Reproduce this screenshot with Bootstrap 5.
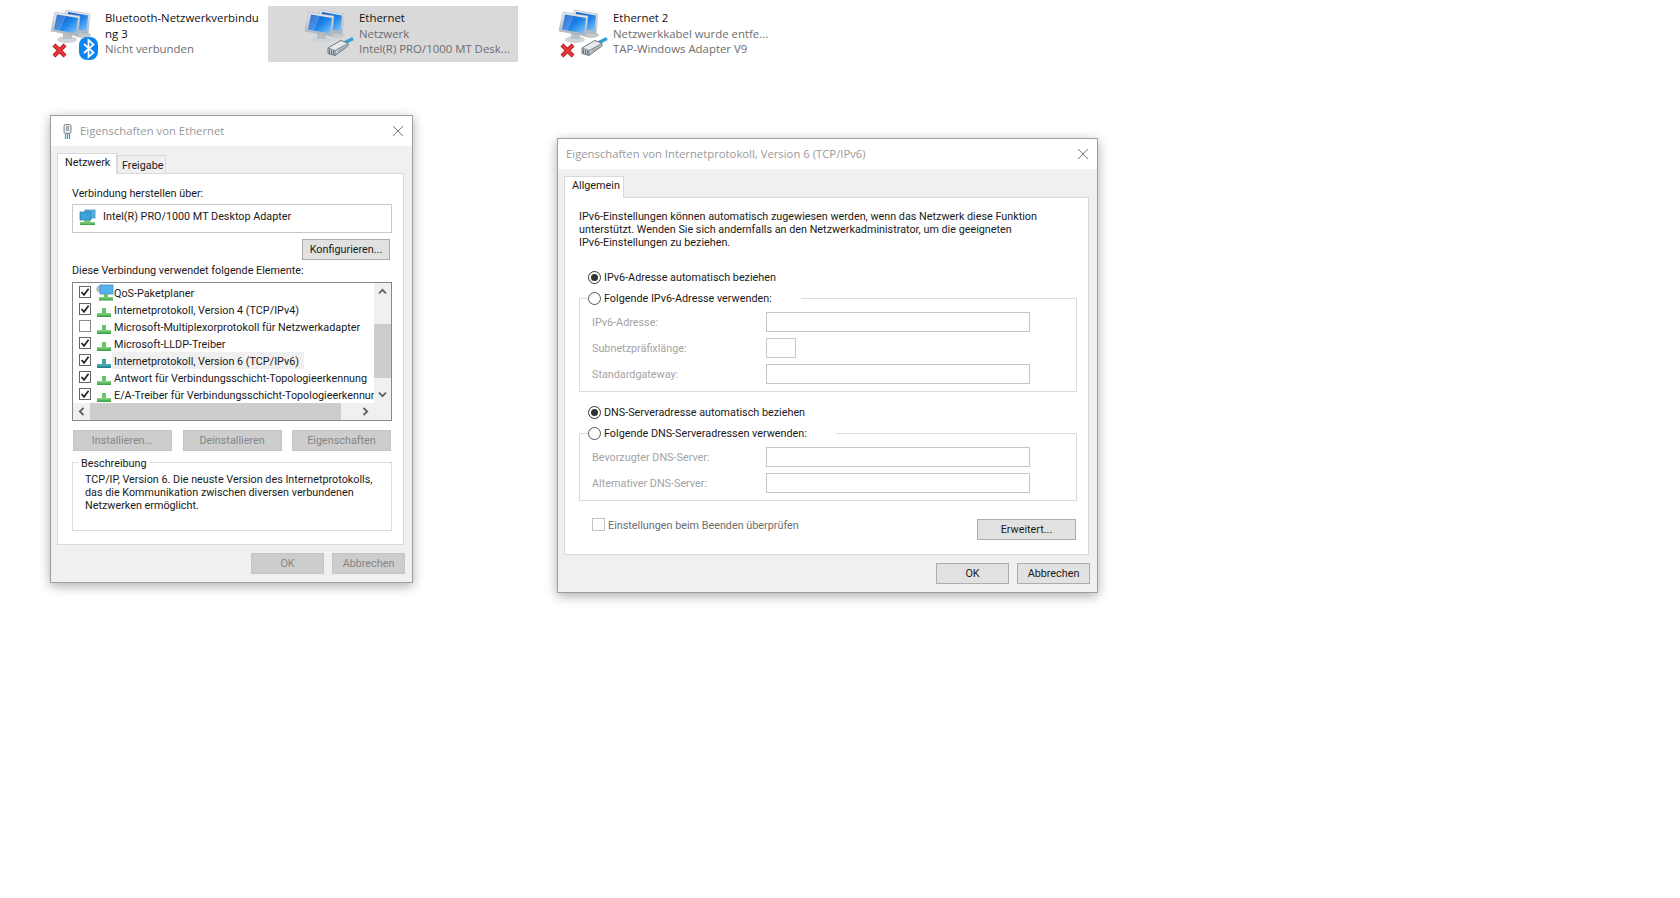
<!DOCTYPE html>
<html lang="de">
<head>
<meta charset="UTF-8">
<title>Netzwerkverbindungen</title>
<link href="https://cdn.jsdelivr.net/npm/bootstrap@5.3.0/dist/css/bootstrap.min.css" rel="stylesheet">
<style>
  body { background: #fff; font-family: "Open Sans", "Liberation Sans", sans-serif; font-size: 11.4px; color: #1a1a1a; height: 898px; overflow: hidden; position: relative; }

  /* explorer items */
  .conn-row { padding: 6px 0 0 14px; gap: 4px; }
  .conn-item { width: 250px; height: 56px; padding: 4px 0 0 36px; font-size: 11.4px; line-height: 15.5px; }
  .conn-item.is-selected { background: #d9d9d9; }
  .conn-item svg { width: 54px; height: 56px; margin: -4px 1px 0 0; flex: none; }
  .conn-sub { color: #6d6d6d; white-space: nowrap; }
  .conn-name { color: #111; white-space: nowrap; }

  /* dialogs */
  .win { position: absolute; background: #f0f0f0; border: 1px solid #9d9d9d; box-shadow: 0 3px 11px rgba(0,0,0,.32); font-family: Roboto, "Liberation Sans", sans-serif; font-size: 10.8px; }
  .win-eth { left: 50px; top: 115px; width: 363px; height: 468px; }
  .win-ipv6 { left: 557px; top: 138px; width: 541px; height: 455px; }
  .win-title { height: 30px; background: #fff; color: #999; font-family: "Open Sans", sans-serif; font-size: 11.3px; padding: 0 9px 0 8px; }
  .win-eth .win-title { padding-left: 12px; }
  .win-title svg.plug { margin-right: 8px; }
  .win-close { width: 10px; height: 10px; }

  .win .nav-tabs { border: 0; margin: 7px 0 0 6px; align-items: flex-end; flex-wrap: nowrap; }
  .win .nav-link { background: #f0f0f0; border: 1px solid #d9d9d9; border-bottom: 0; border-radius: 0; color: #1a1a1a; padding: 1px 4px 0; height: 18px; line-height: 17px; margin: 0; font-size: 10.8px; }
  .win .nav-link.active { background: #fff; height: 21px; line-height: 18px; margin-bottom: -1px; position: relative; z-index: 1; color: #1a1a1a; border-color: #d9d9d9; padding: 0 7px; }
  .win-eth .nav-link.active { width: 60px; }
  .win-eth .nav-link:not(.active) { width: 49px; margin-left: 0; }
  .win-ipv6 .nav-link.active { width: 60px; height: 22px; }
  .win-panel { background: #fff; border: 1px solid #d9d9d9; margin-left: 6px; padding: 12px 11px 0 14px; }
  .win-eth .win-panel { width: 347px; height: 372px; }
  .win-ipv6 .win-panel { width: 525px; height: 358px; }
  .win-foot { gap: 8px; justify-content: flex-end; margin-top: 8px; padding-right: 7px; }

  .win-btn { height: 21px; padding: 1px 0 0; border-radius: 0; font-size: 10.8px; line-height: 18px; background: #e1e1e1; border: 1px solid #adadad; color: #1a1a1a; }
  .win-btn:disabled { background: #cdcdcd; border-color: #c4c4c4; color: #858585; opacity: 1; }
  .win-foot .win-btn { width: 73px; }

  .lbl { line-height: 15px; }
  .adapter-box { width: 320px; height: 29px; border: 1px solid #c8c8c8; margin-top: 3px; padding: 4px 0 0 6px; gap: 7px; line-height: 15px; }
  .btn-config { width: 88px; margin: 6px 2px 0 auto; display: block; }
  .lbl-elements { margin-top: 3px; }

  .comp-list { width: 320px; height: 139px; border: 1px solid #828790; margin-top: 4px; }
  .comp-left { width: 301px; }
  .comp-rows { height: 120px; padding: 1px 0 0 6px; overflow: hidden; }
  .comp-row { height: 17px; line-height: 19px; white-space: nowrap; background: transparent; border: 0; padding: 0; border-radius: 0; color: #1a1a1a; font-size: 10.8px; }
  .comp-row .comp-ico { width: 14px; height: 9px; margin: 7px 3px 0 6px; flex: none; }
  .comp-row .comp-ico-qos { width: 18px; height: 17px; margin: 0 0 0 5px; flex: none; }
  .comp-sel { background: #f0f0f0; margin-left: -2px; padding: 0 5px 0 2px; line-height: 17px; padding-top: 1px; }

  .cb { width: 12px; height: 12px; border: 1px solid #666; flex: none; background: #fff; margin-top: 2px; }
  .cb svg { display: block; width: 10px; height: 10px; }
  .cb-off { border-color: #8a8a8a; }

  .vbar { width: 17px; background: #f0f0f0; }
  .hbar { height: 17px; background: #f0f0f0; }
  .bar-arrow { width: 17px; height: 17px; flex: none; }
  .bar-arrow svg { width: 9px; height: 9px; }
  .vbar-thumb { height: 54px; margin-top: 24px; margin-bottom: auto; background: #cdcdcd; }
  .hbar-thumb { width: 251px; background: #cdcdcd; margin-right: auto; }

  .btn-row { margin: 9px 1px 0 1px; width: 318px; }
  .btn-row .win-btn { width: 99px; }

  .grp-desc { width: 320px; height: 69px; border: 1px solid #dcdcdc; margin-top: 11px; }
  .grp-legend { display: block; width: fit-content; background: #fff; margin: -7px 0 0 5px; padding: 0 3px; line-height: 15px; }
  .grp-text { margin: 2px 0 0 12px; line-height: 13px; white-space: nowrap; }

  .para { line-height: 13px; white-space: nowrap; }
  .rd { width: 13px; height: 13px; border: 1px solid #555; border-radius: 50%; background: #fff; flex: none; margin-right: 3px; }
  .rd-on { border-color: #333; }
  .rd-on::after { content: ""; width: 7px; height: 7px; border-radius: 50%; background: #333; }
  .rd-line { height: 16px; line-height: 16px; margin-left: 9px; white-space: nowrap; }
  .rd-txt { padding-top: 2px; }
  .rd-first { margin-top: 20px; }
  .rd-second { margin-top: 12px; }
  .ip-grp { width: 498px; border: 1px solid #dcdcdc; margin-top: 13px; padding: 0 0 7px 12px; }
  .ip-legend { width: fit-content; background: #fff; margin: -9px 0 0 -4px; padding-right: 29px; padding-left: 0; }
  .ip-field { height: 20px; margin-top: 6px; color: #a3a3a3; }
  .ip-field .ip-lbl { width: 174px; padding-top: 2px; }
  .ip-input { width: 264px; height: 20px; min-height: 0; padding: 0; border-radius: 0; border: 1px solid #c6c6c6; background: #fff; }
  .ip-input:disabled { background: #fff; }
  .ip-input-short { width: 30px; }
  .ip-foot { width: 497px; margin-top: 18px; }
  .ip-check { padding-left: 13px; color: #6d6d6d; gap: 3px; line-height: 13px; margin-top: -1px; }
  .ip-check .cb { width: 13px; height: 13px; border-color: #c2c2c2; margin-top: 0; }
  .ip-check-txt { padding-top: 1px; }
  .btn-adv { width: 99px; }
</style>
</head>
<body>

<svg width="0" height="0" class="d-block" style="position:absolute">
  <defs>
    <linearGradient id="gScreen" x1="0" y1="0" x2="1" y2="1"><stop offset="0" stop-color="#0a4fc4"/><stop offset=".55" stop-color="#1f86ea"/><stop offset="1" stop-color="#8cc9f7"/></linearGradient>
    <linearGradient id="gFrame" x1="0" y1="0" x2="0" y2="1"><stop offset="0" stop-color="#e8edf1"/><stop offset="1" stop-color="#aab3ba"/></linearGradient>
    <linearGradient id="gGreen" x1="0" y1="0" x2="0" y2="1"><stop offset="0" stop-color="#8fd68a"/><stop offset="1" stop-color="#2f9e3c"/></linearGradient>
    <linearGradient id="gTeal" x1="0" y1="0" x2="0" y2="1"><stop offset="0" stop-color="#59b3b3"/><stop offset="1" stop-color="#1c7c8c"/></linearGradient>
    <symbol id="pcs" viewBox="0 0 54 56">
      <ellipse cx="33" cy="29" rx="8" ry="3" fill="#c3c9ce"/>
      <polygon points="16,4 40,8 38,28 14,25" fill="url(#gFrame)" stroke="#b4bcc3" stroke-width=".6"/>
      <polygon points="18,6 38,9.5 36.5,25 17,22" fill="url(#gScreen)"/>
      <ellipse cx="17" cy="33.500" rx="10" ry="3.600" fill="#cfd4d8"/>
      <polygon points="13,26 22,27 22,33 13,33" fill="#b9c0c6"/>
      <polygon points="5,6 30,10 28,30 1,25" fill="url(#gFrame)" stroke="#a9b2b9" stroke-width=".6"/>
      <polygon points="7,8.500 28,12 26.300,27.500 4,23.500" fill="url(#gScreen)"/>
      <polygon points="7,8.500 16,10 10,24.500 4,23.500" fill="#fff" opacity=".18"/>
    </symbol>
    <symbol id="redx" viewBox="0 0 54 56">
      <path d="M4 39 L15 50 M15 39 L4 50" stroke="#a3161b" stroke-width="4.2" fill="none"/>
      <path d="M4 39 L15 50 M15 39 L4 50" stroke="#e8353a" stroke-width="2.600" fill="none"/>
    </symbol>
    <symbol id="ethplug" viewBox="0 0 54 56">
      <path d="M40 37 L49 32.500" stroke="#35a0d8" stroke-width="3.500" fill="none"/>
      <polygon points="24,42 37,34.500 44,37.500 44,40 31,49.500 24,47.500" fill="#c6ccd1" stroke="#66717a" stroke-width=".9"/>
      <polygon points="24,42 31,44.500 44,37.500 37,34.500" fill="#e6eaed" stroke="#66717a" stroke-width=".7"/>
      <path d="M31 44.500 V49.500" stroke="#66717a" stroke-width=".9" fill="none"/>
      <path d="M25.500 43.500 V47.500 M27.500 44 V48 M29.500 44.500 V48.500" stroke="#59646d" stroke-width=".9" fill="none"/>
      <path d="M33.500 43.500 L42.500 38.500 M33.500 45.500 L42.500 40.500" stroke="#838d95" stroke-width=".8" fill="none"/>
    </symbol>
    <symbol id="proto" viewBox="0 0 14 9">
      <rect x="5" y="0" width="4" height="5" fill="#6cc26a"/>
      <rect x="0" y="5" width="14" height="4" fill="url(#gGreen)"/>
    </symbol>
    <symbol id="protoTeal" viewBox="0 0 14 9">
      <rect x="5" y="0" width="4" height="5" fill="#4aa0a8"/>
      <rect x="0" y="5" width="14" height="4" fill="url(#gTeal)"/>
    </symbol>
    <symbol id="tick" viewBox="0 0 10 10">
      <path d="M1.500 5 L4 7.800 L8.600 1.800" stroke="#222" stroke-width="1.700" fill="none"/>
    </symbol>
    <symbol id="chev-up" viewBox="0 0 9 9"><path d="M1 6.500 L4.500 2.800 L8 6.500" stroke="#5f5f5f" stroke-width="1.800" fill="none"/></symbol>
    <symbol id="chev-down" viewBox="0 0 9 9"><path d="M1 2.500 L4.500 6.200 L8 2.500" stroke="#5f5f5f" stroke-width="1.800" fill="none"/></symbol>
    <symbol id="chev-left" viewBox="0 0 9 9"><path d="M6.500 1 L2.800 4.500 L6.500 8" stroke="#5f5f5f" stroke-width="1.800" fill="none"/></symbol>
    <symbol id="chev-right" viewBox="0 0 9 9"><path d="M2.500 1 L6.200 4.500 L2.500 8" stroke="#5f5f5f" stroke-width="1.800" fill="none"/></symbol>
    <symbol id="x-close" viewBox="0 0 10 10"><path d="M0 0 L10 10 M10 0 L0 10" stroke="#7a7a7a" stroke-width="1" fill="none"/></symbol>
  </defs>
</svg>

<!-- network connections -->
<div class="conn-row d-flex">
  <div class="conn-item d-flex">
    <svg viewBox="0 0 54 56">
      <use href="#pcs"/><use href="#redx"/>
      <rect x="29" y="31" width="19" height="23" rx="8" fill="#0a84f0"/>
      <path d="M34 38 L43.500 46.500 L38.500 51 V34 L43.500 38.500 L34 47" stroke="#fff" stroke-width="1.700" fill="none"/>
    </svg>
    <div>
      <div class="conn-name">Bluetooth-Netzwerkverbindu<br>ng 3</div>
      <div class="conn-sub">Nicht verbunden</div>
    </div>
  </div>
  <div class="conn-item is-selected d-flex">
    <svg viewBox="0 0 54 56"><use href="#pcs"/><use href="#ethplug"/></svg>
    <div>
      <div class="conn-name">Ethernet</div>
      <div class="conn-sub">Netzwerk</div>
      <div class="conn-sub">Intel(R) PRO/1000 MT Desk...</div>
    </div>
  </div>
  <div class="conn-item d-flex">
    <svg viewBox="0 0 54 56"><use href="#pcs"/><use href="#redx"/><use href="#ethplug"/></svg>
    <div>
      <div class="conn-name">Ethernet 2</div>
      <div class="conn-sub">Netzwerkkabel wurde entfe...</div>
      <div class="conn-sub">TAP-Windows Adapter V9</div>
    </div>
  </div>
</div>

<!-- Eigenschaften von Ethernet -->
<div class="win win-eth">
  <div class="win-title d-flex align-items-center">
    <svg class="plug" width="9" height="15" viewBox="0 0 9 15">
      <rect x="1" y="0.500" width="7" height="9" rx="1.500" fill="#e3e6e8" stroke="#7f8a92"/>
      <rect x="3" y="2" width="3" height="5" fill="#a8b1b8"/>
      <path d="M2.500 10 V15 M4.500 10 V15 M6.500 10 V15" stroke="#3b9ad0" stroke-width="1.200"/>
    </svg>
    <span>Eigenschaften von Ethernet</span>
    <svg class="win-close ms-auto"><use href="#x-close"/></svg>
  </div>
  <ul class="nav nav-tabs">
    <li class="nav-item"><a class="nav-link active" href="#">Netzwerk</a></li>
    <li class="nav-item"><a class="nav-link" href="#">Freigabe</a></li>
  </ul>
  <div class="win-panel">
    <div class="lbl">Verbindung herstellen über:</div>
    <div class="adapter-box d-flex align-items-start">
      <svg width="17" height="17" viewBox="0 0 17 17">
        <rect x="6" y="1" width="10" height="8" fill="#58b4e8" stroke="#3c7fb0" stroke-width=".7"/>
        <rect x="1" y="3" width="11" height="8" fill="#3aa3de" stroke="#2c6f9f" stroke-width=".7"/>
        <rect x="5" y="11" width="6" height="2" fill="#6cc26a"/>
        <rect x="1" y="13" width="15" height="3" fill="url(#gGreen)"/>
      </svg>
      <span>Intel(R) PRO/1000 MT Desktop Adapter</span>
    </div>
    <button class="btn win-btn btn-config">Konfigurieren...</button>
    <div class="lbl lbl-elements">Diese Verbindung verwendet folgende Elemente:</div>

    <div class="comp-list d-flex">
      <div class="comp-left d-flex flex-column">
        <div class="comp-rows list-group">
          <div class="comp-row list-group-item d-flex">
            <span class="cb d-block"><svg><use href="#tick"/></svg></span>
            <svg class="comp-ico-qos" viewBox="0 0 18 17">
              <circle cx="4" cy="5" r="3.200" fill="#b9bfc4" stroke="#8f979e" stroke-width=".6"/>
              <rect x="4" y="1" width="13" height="9" fill="#54b2ef" stroke="#3a86bd" stroke-width=".7"/>
              <rect x="8" y="10" width="4" height="3" fill="#6cc26a"/>
              <rect x="3" y="13" width="14" height="3.500" fill="url(#gGreen)"/>
            </svg>
            <span>QoS-Paketplaner</span>
          </div>
          <div class="comp-row list-group-item d-flex">
            <span class="cb d-block"><svg><use href="#tick"/></svg></span>
            <svg class="comp-ico"><use href="#proto"/></svg>
            <span>Internetprotokoll, Version 4 (TCP/IPv4)</span>
          </div>
          <div class="comp-row list-group-item d-flex">
            <span class="cb cb-off d-block"></span>
            <svg class="comp-ico"><use href="#proto"/></svg>
            <span>Microsoft-Multiplexorprotokoll für Netzwerkadapter</span>
          </div>
          <div class="comp-row list-group-item d-flex">
            <span class="cb d-block"><svg><use href="#tick"/></svg></span>
            <svg class="comp-ico"><use href="#proto"/></svg>
            <span>Microsoft-LLDP-Treiber</span>
          </div>
          <div class="comp-row list-group-item d-flex">
            <span class="cb d-block"><svg><use href="#tick"/></svg></span>
            <svg class="comp-ico"><use href="#protoTeal"/></svg>
            <span class="comp-sel">Internetprotokoll, Version 6 (TCP/IPv6)</span>
          </div>
          <div class="comp-row list-group-item d-flex">
            <span class="cb d-block"><svg><use href="#tick"/></svg></span>
            <svg class="comp-ico"><use href="#proto"/></svg>
            <span>Antwort für Verbindungsschicht-Topologieerkennung</span>
          </div>
          <div class="comp-row list-group-item d-flex">
            <span class="cb d-block"><svg><use href="#tick"/></svg></span>
            <svg class="comp-ico"><use href="#proto"/></svg>
            <span>E/A-Treiber für Verbindungsschicht-Topologieerkennung</span>
          </div>
        </div>
        <div class="hbar d-flex">
          <span class="bar-arrow d-flex align-items-center justify-content-center"><svg><use href="#chev-left"/></svg></span>
          <span class="hbar-thumb"></span>
          <span class="bar-arrow d-flex align-items-center justify-content-center"><svg><use href="#chev-right"/></svg></span>
        </div>
      </div>
      <div class="vbar d-flex flex-column">
        <span class="bar-arrow d-flex align-items-center justify-content-center"><svg><use href="#chev-up"/></svg></span>
        <span class="vbar-thumb"></span>
        <span class="bar-arrow d-flex align-items-center justify-content-center"><svg><use href="#chev-down"/></svg></span>
        <span class="bar-arrow"></span>
      </div>
    </div>

    <div class="btn-row d-flex justify-content-between">
      <button class="btn win-btn" disabled>Installieren...</button>
      <button class="btn win-btn" disabled>Deinstallieren</button>
      <button class="btn win-btn" disabled>Eigenschaften</button>
    </div>

    <div class="grp-desc">
      <span class="grp-legend">Beschreibung</span>
      <div class="grp-text">TCP/IP, Version 6. Die neuste Version des Internetprotokolls,<br>das die Kommunikation zwischen diversen verbundenen<br>Netzwerken ermöglicht.</div>
    </div>
  </div>
  <div class="win-foot d-flex">
    <button class="btn win-btn" disabled>OK</button>
    <button class="btn win-btn" disabled>Abbrechen</button>
  </div>
</div>

<!-- Eigenschaften von Internetprotokoll -->
<div class="win win-ipv6">
  <div class="win-title d-flex align-items-center">
    <span>Eigenschaften von Internetprotokoll, Version 6 (TCP/IPv6)</span>
    <svg class="win-close ms-auto"><use href="#x-close"/></svg>
  </div>
  <ul class="nav nav-tabs">
    <li class="nav-item"><a class="nav-link active" href="#">Allgemein</a></li>
  </ul>
  <div class="win-panel">
    <div class="para">IPv6-Einstellungen können automatisch zugewiesen werden, wenn das Netzwerk diese Funktion<br>unterstützt. Wenden Sie sich andernfalls an den Netzwerkadministrator, um die geeigneten<br>IPv6-Einstellungen zu beziehen.</div>

    <div class="rd-line rd-first d-flex align-items-center"><span class="rd rd-on d-flex align-items-center justify-content-center"></span><span class="rd-txt">IPv6-Adresse automatisch beziehen</span></div>
    <div class="ip-grp">
      <div class="rd-line ip-legend d-flex align-items-center"><span class="rd"></span><span class="rd-txt">Folgende IPv6-Adresse verwenden:</span></div>
      <div class="ip-field d-flex align-items-center"><span class="ip-lbl">IPv6-Adresse:</span><input class="form-control ip-input" disabled></div>
      <div class="ip-field d-flex align-items-center"><span class="ip-lbl">Subnetzpräfixlänge:</span><input class="form-control ip-input ip-input-short" disabled></div>
      <div class="ip-field d-flex align-items-center"><span class="ip-lbl">Standardgateway:</span><input class="form-control ip-input" disabled></div>
    </div>

    <div class="rd-line rd-second d-flex align-items-center"><span class="rd rd-on d-flex align-items-center justify-content-center"></span><span class="rd-txt">DNS-Serveradresse automatisch beziehen</span></div>
    <div class="ip-grp">
      <div class="rd-line ip-legend d-flex align-items-center"><span class="rd"></span><span class="rd-txt">Folgende DNS-Serveradressen verwenden:</span></div>
      <div class="ip-field d-flex align-items-center"><span class="ip-lbl">Bevorzugter DNS-Server:</span><input class="form-control ip-input" disabled></div>
      <div class="ip-field d-flex align-items-center"><span class="ip-lbl">Alternativer DNS-Server:</span><input class="form-control ip-input" disabled></div>
    </div>

    <div class="ip-foot d-flex justify-content-between align-items-start">
      <div class="ip-check d-flex"><span class="cb d-block"></span><span class="ip-check-txt">Einstellungen beim Beenden überprüfen</span></div>
      <button class="btn win-btn btn-adv">Erweitert...</button>
    </div>
  </div>
  <div class="win-foot d-flex">
    <button class="btn win-btn">OK</button>
    <button class="btn win-btn">Abbrechen</button>
  </div>
</div>

<script src="https://cdn.jsdelivr.net/npm/bootstrap@5.3.0/dist/js/bootstrap.bundle.min.js"></script>
</body>
</html>
